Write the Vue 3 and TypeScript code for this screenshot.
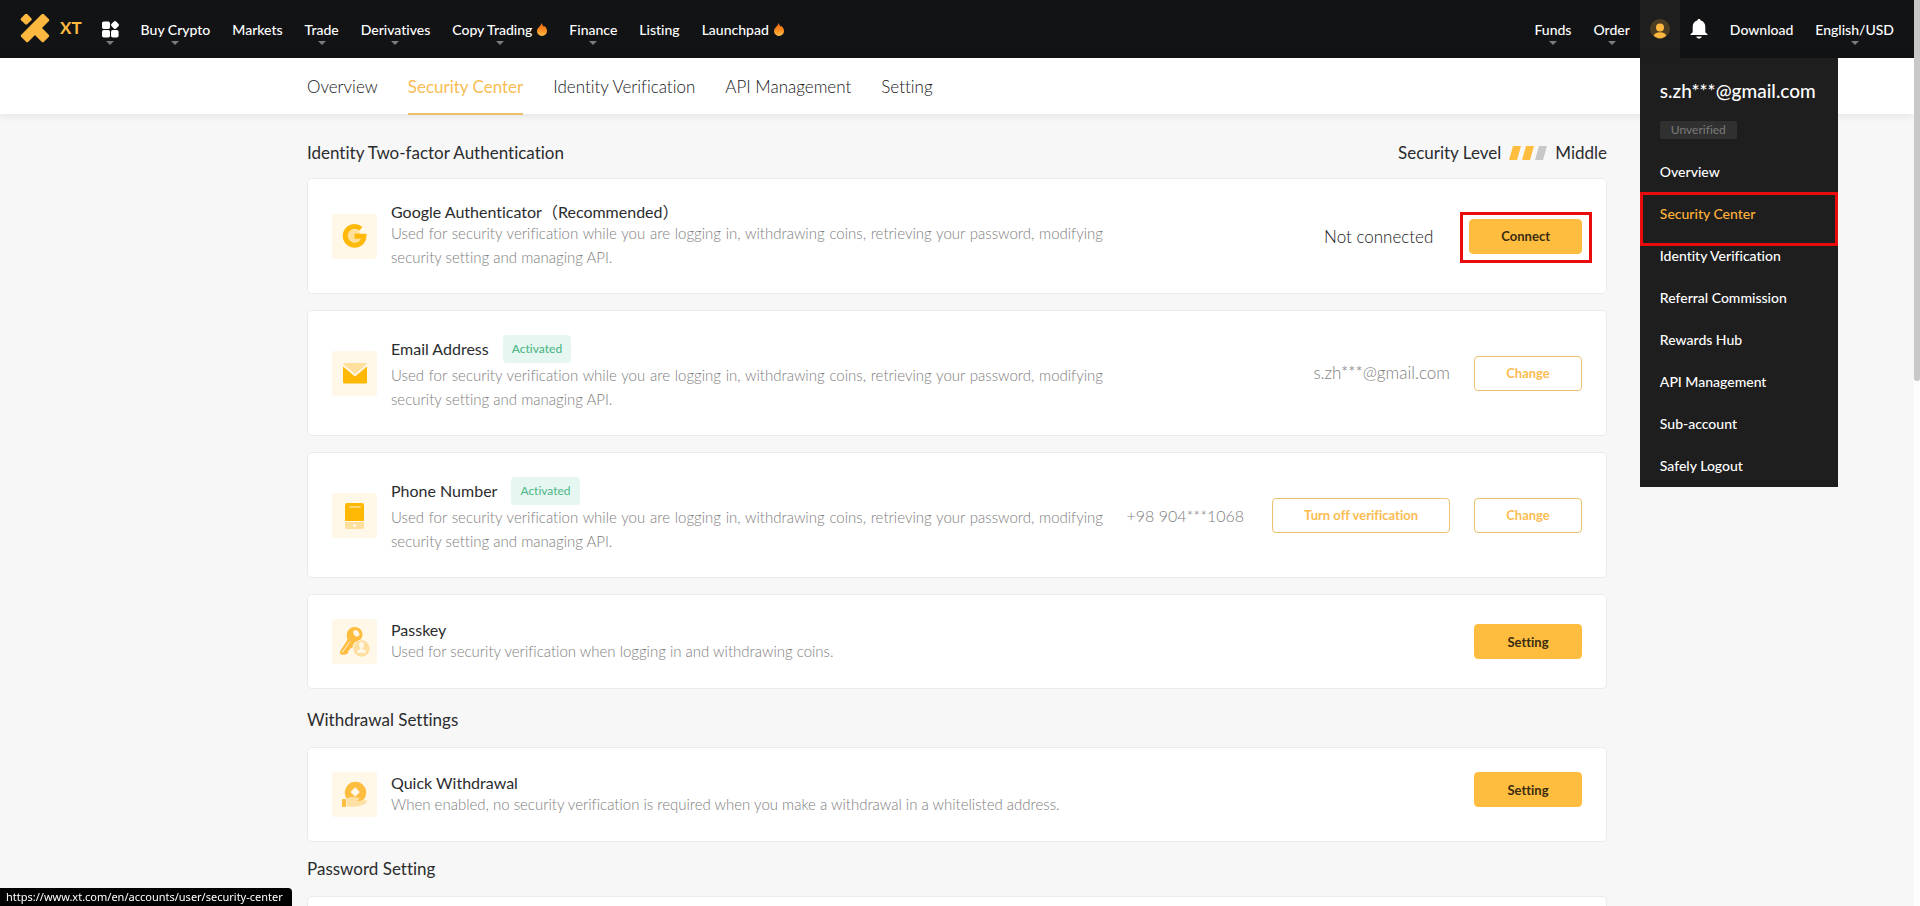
<script setup lang="ts">
interface NavItem {
  label: string
  caret?: boolean
  hot?: boolean
}

interface Action {
  label: string
  kind: 'solid' | 'outline'
  marked?: boolean
}

interface Card {
  icon: 'google' | 'mail' | 'phone' | 'key' | 'coin'
  title: string
  badge?: string
  text: string
  status?: string
  tone?: 'dark' | 'muted'
  actions: Action[]
}

interface Section {
  id: string
  title: string
  cards: Card[]
}

const leftNav: NavItem[] = [
  { label: 'Buy Crypto', caret: true },
  { label: 'Markets' },
  { label: 'Trade', caret: true },
  { label: 'Derivatives', caret: true },
  { label: 'Copy Trading', caret: true, hot: true },
  { label: 'Finance', caret: true },
  { label: 'Listing' },
  { label: 'Launchpad', hot: true },
]

const tabs: string[] = ['Overview', 'Security Center', 'Identity Verification', 'API Management', 'Setting']

const menu: string[] = [
  'Overview',
  'Security Center',
  'Identity Verification',
  'Referral Commission',
  'Rewards Hub',
  'API Management',
  'Sub-account',
  'Safely Logout',
]

const current = 'Security Center'

const usage =
  'Used for security verification while you are logging in, withdrawing coins, retrieving your password, modifying security setting and managing API.'

const sections: Section[] = [
  {
    id: 'identity',
    title: 'Identity Two-factor Authentication',
    cards: [
      {
        icon: 'google',
        title: 'Google Authenticator（Recommended）',
        text: usage,
        status: 'Not connected',
        tone: 'dark',
        actions: [{ label: 'Connect', kind: 'solid', marked: true }],
      },
      {
        icon: 'mail',
        title: 'Email Address',
        badge: 'Activated',
        text: usage,
        status: 's.zh***@gmail.com',
        tone: 'muted',
        actions: [{ label: 'Change', kind: 'outline' }],
      },
      {
        icon: 'phone',
        title: 'Phone Number',
        badge: 'Activated',
        text: usage,
        status: '+98 904***1068',
        tone: 'muted',
        actions: [
          { label: 'Turn off verification', kind: 'outline' },
          { label: 'Change', kind: 'outline' },
        ],
      },
      {
        icon: 'key',
        title: 'Passkey',
        text: 'Used for security verification when logging in and withdrawing coins.',
        actions: [{ label: 'Setting', kind: 'solid' }],
      },
    ],
  },
  {
    id: 'withdrawal',
    title: 'Withdrawal Settings',
    cards: [
      {
        icon: 'coin',
        title: 'Quick Withdrawal',
        text: 'When enabled, no security verification is required when you make a withdrawal in a whitelisted address.',
        actions: [{ label: 'Setting', kind: 'solid' }],
      },
    ],
  },
]
</script>

<template>
  <div class="page">
    <header class="topbar">
      <a class="brand" href="#" aria-label="XT">
        <svg class="brand-mark" viewBox="0 0 30 30" aria-hidden="true">
          <g fill="#fdb840">
            <rect x="-16" y="-5" width="32" height="10" rx="1.6" transform="translate(15 14) rotate(-45)" />
            <rect x="0" y="-5" width="16" height="10" rx="1.6" transform="translate(15 14) rotate(45)" />
            <rect x="-4.3" y="-4.3" width="8.6" height="8.6" rx="1.4" transform="translate(6.2 5.2) rotate(45)" />
          </g>
        </svg>
        <span class="brand-name">XT</span>
      </a>
      <nav class="nav" aria-label="Main">
        <a class="nav-link has-caret" href="#" aria-label="Products">
          <svg class="grid-icon" viewBox="0 0 17 17" aria-hidden="true">
            <g fill="#fff">
              <rect x="0" y="0.500" width="8" height="7.600" rx="1.8" />
              <rect x="0" y="9" width="8" height="7.600" rx="1.8" />
              <rect x="9" y="9" width="7.600" height="7.600" rx="1.8" />
              <rect x="-3.2" y="-3.2" width="6.4" height="6.4" rx="1.6" transform="translate(13 4) rotate(45)" />
            </g>
          </svg>
        </a>
        <a v-for="item in leftNav" :key="item.label" class="nav-link" :class="{ 'has-caret': item.caret }" href="#">
          {{ item.label }}
          <svg v-if="item.hot" class="flame" viewBox="0 0 10 13" aria-hidden="true">
            <defs>
              <linearGradient id="flame-fill" x1="0" y1="0" x2="0" y2="1">
                <stop offset="0" stop-color="#e8651a" />
                <stop offset="0.55" stop-color="#fb8c1e" />
                <stop offset="1" stop-color="#ffc04d" />
              </linearGradient>
            </defs>
            <path
              d="M4.6 0C5.4 1.8 6.1 2.8 7 3.8L7.7 3C9.2 4.7 10 6.300 10 8.100C10 11 7.800 13 5 13C2.200 13 0 11 0 8.100C0 5.600 1.700 4.900 2.700 3.300C3.500 2.200 4.300 1.400 4.600 0Z"
              fill="url(#flame-fill)"
            />
          </svg>
        </a>
      </nav>
      <nav class="nav nav-right" aria-label="Account">
        <a class="nav-link has-caret" href="#">Funds</a>
        <a class="nav-link has-caret order" href="#">Order</a>
        <div class="account">
          <button class="avatar" type="button" aria-label="Account menu" aria-expanded="true">
            <svg viewBox="0 0 20 20" aria-hidden="true">
              <circle cx="10" cy="10" r="10" fill="#4b3d22" />
              <circle cx="10" cy="8.600" r="4" fill="#fdb840" />
              <path d="M3.800 16.400C4.600 14.200 7 13.300 10 13.300C13 13.300 15.400 14.200 16.200 16.400C14.600 18.300 12.500 19.200 10 19.200C7.500 19.200 5.400 18.300 3.800 16.400Z" fill="#fdb840" />
            </svg>
          </button>
          <div class="dropdown">
            <p class="mail">s.zh***@gmail.com</p>
            <span class="unverified">Unverified</span>
            <ul class="menu">
              <li v-for="entry in menu" :key="entry" :class="{ marked: entry === current }">
                <a href="#" :class="{ active: entry === current }">{{ entry }}</a>
              </li>
            </ul>
          </div>
        </div>
        <button class="bell" type="button" aria-label="Notifications">
          <svg viewBox="0 0 18 20" aria-hidden="true">
            <path
              d="M9 0C10 0 10.600 0.600 10.700 1.500C13.600 2.200 15.300 4.500 15.300 7.600V13.200L17.500 15.200V16H0.500V15.200L2.700 13.200V7.600C2.700 4.500 4.400 2.200 7.300 1.500C7.400 0.600 8 0 9 0Z"
              fill="#fff"
            />
            <path d="M6.300 17.400H11.700C11.300 18.800 10.300 19.500 9 19.500C7.700 19.500 6.700 18.800 6.300 17.400Z" fill="#fff" />
          </svg>
        </button>
        <a class="nav-link" href="#">Download</a>
        <a class="nav-link has-caret" href="#">English/USD</a>
      </nav>
    </header>

    <nav class="tabs" aria-label="Account sections">
      <div class="tabs-inner">
        <a v-for="tab in tabs" :key="tab" class="tab" :class="{ current: tab === current }" href="#">{{ tab }}</a>
      </div>
    </nav>

    <main class="content">
      <section v-for="section in sections" :key="section.id" class="section" :class="section.id">
        <div class="section-head">
          <h2>{{ section.title }}</h2>
          <div v-if="section.id === 'identity'" class="level">
            <span>Security Level</span>
            <svg class="level-bars" viewBox="0 0 38 14" aria-hidden="true">
              <path d="M4 0H12L8 14H0Z" fill="#ffbd40" />
              <path d="M17 0H25L21 14H13Z" fill="#ffbd40" />
              <path d="M30 0H38L34 14H26Z" fill="#c8c8c8" />
            </svg>
            <span>Middle</span>
          </div>
        </div>

        <article v-for="card in section.cards" :key="card.title" class="card" :class="card.icon">
          <div class="tile">
            <svg v-if="card.icon === 'google'" viewBox="0 0 45 45" aria-hidden="true">
              <circle cx="22" cy="22.500" r="7" fill="#ffe09a" />
              <path d="M28.800 14.800A9.400 9.400 0 1 0 32 22.200H22.500" fill="none" stroke="#ffb90a" stroke-width="5" />
            </svg>
            <svg v-else-if="card.icon === 'mail'" viewBox="0 0 45 45" aria-hidden="true">
              <path d="M12 12H34Q35 12 34.400 13.200L23 23.200L11.600 13.200Q11 12 12 12Z" fill="#ffdf9c" />
              <path d="M11 15.500L23 25.500L35 15.500V31Q35 32.500 33.500 32.500H12.500Q11 32.500 11 31Z" fill="#ffb905" />
            </svg>
            <svg v-else-if="card.icon === 'phone'" viewBox="0 0 45 45" aria-hidden="true">
              <path d="M13 28V12Q13 10 15 10H30Q32 10 32 12V28Z" fill="#ffb905" />
              <rect x="17" y="13" width="12" height="2" rx="1" fill="#ffd56b" />
              <path d="M13 29H32V34Q32 36 30 36H15Q13 36 13 34Z" fill="#ffdf9c" />
              <circle cx="22.500" cy="32.500" r="1.600" fill="#fff8e9" />
            </svg>
            <svg v-else-if="card.icon === 'key'" viewBox="0 0 45 45" aria-hidden="true">
              <path
                d="M22.500 8C27 8 30.500 11 30.500 15.500C30.500 19.500 27.500 22.800 23.500 23L20.500 26.500L21.500 28L18.800 29.300L16 32.500V34.500L12.500 35.800H8.500L8 32.500L15.600 20.500C14.600 18.500 14.500 16.200 15 14C16 10.400 19 8 22.500 8Z"
                fill="#ffbd40"
              />
              <ellipse cx="24.300" cy="14.300" rx="2.700" ry="3.500" transform="rotate(-38 24.300 14.300)" fill="#fff8e9" />
              <path d="M10.200 33.500L18 22.500" stroke="#fff3d8" stroke-width="1" />
              <circle cx="29.500" cy="29.500" r="8.800" fill="#fff8e9" />
              <circle cx="29.500" cy="29.500" r="8.200" fill="#ffdfa0" />
              <ellipse cx="29.500" cy="26" rx="2.500" ry="3" fill="#fff8e9" />
              <path d="M25 33.800C25 31.500 26.500 30.900 28.400 30.300V28H30.600V30.300C32.500 30.900 34 31.500 34 33.800Z" fill="#fff8e9" />
            </svg>
            <svg v-else viewBox="0 0 45 45" aria-hidden="true">
              <circle cx="23.500" cy="20.500" r="10.700" fill="#ffbd40" />
              <rect x="-3.400" y="-3.400" width="6.800" height="6.800" rx="0.800" transform="translate(23.200 20) rotate(45)" fill="#fff8e9" />
              <path
                d="M14.500 27C17 25 19.500 24.800 22 25.200L26.500 25.400Q28 26 27 27.600L24.500 28.800C28.500 29.200 31.500 28 35 28.300C35.600 30.500 33 32 30 33.200C25 35 20 34.800 14.500 34.600Z"
                fill="#ffe0a4"
              />
              <rect x="10" y="27" width="4" height="8" rx="0.800" fill="#ffbd40" />
            </svg>
          </div>
          <div class="info">
            <div class="title-row">
              <h3>{{ card.title }}</h3>
              <span v-if="card.badge" class="badge">{{ card.badge }}</span>
            </div>
            <p>{{ card.text }}</p>
          </div>
          <div class="side">
            <span v-if="card.status" class="status" :class="card.tone">{{ card.status }}</span>
            <div v-for="action in card.actions" :key="action.label" class="action" :class="{ marked: action.marked }">
              <button type="button" class="btn" :class="action.kind">{{ action.label }}</button>
            </div>
          </div>
        </article>
      </section>

      <section class="section password">
        <div class="section-head">
          <h2>Password Setting</h2>
        </div>
        <article class="card blank"></article>
      </section>
    </main>

    <div class="scrollbar" aria-hidden="true"><div class="thumb"></div></div>
    <div class="link-hint">https://www.xt.com/en/accounts/user/security-center</div>
  </div>
</template>

<style>
html,
body {
  margin: 0;
  background: #f7f7f7;
}
</style>

<style scoped>
.page {
  box-sizing: border-box;
  height: 100vh;
  overflow: hidden;
  padding-right: 6px;
  background: #f7f7f7;
  color: #2b2c2e;
  font-family: Lato, 'Noto Sans CJK SC', sans-serif;
  font-size: 14px;
  font-variant-ligatures: none;
}

.page *,
.page *::before,
.page *::after {
  box-sizing: border-box;
}

a {
  color: inherit;
  text-decoration: none;
}

button {
  font-family: inherit;
  font-variant-ligatures: none;
  cursor: pointer;
}

h2,
h3,
p,
ul {
  margin: 0;
  padding: 0;
  font-weight: 400;
}

svg {
  display: block;
}

.topbar {
  display: flex;
  align-items: center;
  height: 58px;
  padding: 0 20px;
  background: #121315;
  color: #fff;
}

.brand {
  display: flex;
  align-items: center;
  gap: 10px;
  margin-right: 20px;
}

.brand-mark {
  width: 30px;
  height: 30px;
}

.brand-name {
  padding-bottom: 2px;
  color: #fdb840;
  font-size: 17px;
  font-weight: 700;
  line-height: 26px;
}

.nav {
  display: flex;
  align-items: center;
  gap: 22px;
  height: 100%;
}

.nav-right {
  margin-left: auto;
}

.nav-link {
  position: relative;
  display: flex;
  align-items: center;
  gap: 5px;
  height: 100%;
  font-size: 14px;
  font-weight: 500;
  white-space: nowrap;
}

.has-caret::after {
  content: '';
  position: absolute;
  bottom: 13px;
  left: 50%;
  margin-left: -4px;
  border: 4px solid transparent;
  border-top-color: #7c7d7e;
  border-bottom: 0;
}

.grid-icon {
  width: 17px;
  height: 17px;
}

.flame {
  width: 10px;
  height: 13px;
}

.order {
  margin-right: -12px;
}

.account {
  position: relative;
  height: 100%;
}

.avatar {
  display: block;
  width: 40px;
  height: 100%;
  padding: 0 10px;
  border: 0;
  background: #1e1e1e;
}

.bell {
  width: 18px;
  margin-left: -12px;
  padding: 0;
  border: 0;
  background: none;
}

.dropdown {
  position: absolute;
  z-index: 5;
  top: 100%;
  left: 0;
  width: 198px;
  padding: 20px 0 0;
  background: #1e1e1e;
}

.mail {
  padding-left: 20px;
  font-size: 19px;
  font-weight: 500;
  line-height: 26px;
}

.unverified {
  display: block;
  width: 77px;
  margin: 17px 0 12px 20px;
  border-radius: 2px;
  background: #303030;
  color: #7b7b7b;
  font-size: 12px;
  line-height: 18px;
  text-align: center;
}

.menu {
  list-style: none;
}

.menu li {
  position: relative;
}

.menu a {
  display: block;
  padding-left: 20px;
  font-size: 14px;
  font-weight: 500;
  line-height: 42px;
}

.menu .active {
  color: #ffb13b;
}

.menu .marked::after {
  content: '';
  position: absolute;
  z-index: 1;
  inset: -1px 0 -11px;
  border: 3px solid #e80c0c;
  pointer-events: none;
}

.tabs {
  position: relative;
  background: #fff;
  box-shadow: 0 2px 8px rgba(0, 0, 0, 0.08);
}

.tabs-inner {
  display: flex;
  gap: 30px;
  max-width: 1300px;
  height: 56px;
  margin: 0 auto;
}

.tab {
  position: relative;
  color: #16171a;
  font-size: 17px;
  font-weight: 300;
  line-height: 58px;
}

.tab.current {
  color: #f9bd55;
  font-weight: 400;
}

.tab.current::after {
  content: '';
  position: absolute;
  right: 0;
  bottom: -1px;
  left: 0;
  height: 2px;
  background: #ecc066;
}

.content {
  max-width: 1300px;
  margin: 0 auto;
}

.section-head {
  display: flex;
  align-items: center;
  justify-content: space-between;
  padding: 16px 0;
  line-height: 22px;
}

.identity .section-head {
  padding-top: 28px;
  padding-bottom: 14px;
}

.withdrawal .section-head {
  padding-top: 20px;
}

h2,
.level {
  font-size: 17px;
}

.level {
  display: flex;
  align-items: center;
  gap: 8px;
}

.level-bars {
  width: 38px;
  height: 14px;
}

.card {
  display: flex;
  align-items: center;
  padding: 24px;
  border: 1px solid #ebebeb;
  border-radius: 5px;
  background: #fff;
}

.card + .card {
  margin-top: 16px;
}

.blank {
  min-height: 96px;
}

.tile {
  flex: none;
  width: 45px;
  height: 45px;
  margin-right: 14px;
  border-radius: 2px;
  background: #fff8e9;
}

.info {
  flex: 0 1 712px;
}

.title-row {
  display: flex;
  align-items: center;
  gap: 14px;
}

h3 {
  font-size: 16px;
  line-height: 18px;
}

.badge {
  padding: 0 9px;
  border-radius: 4px;
  background: #e6f7f2;
  color: #4db685;
  font-size: 12px;
  line-height: 28px;
}

.info p {
  color: #7e7e7e;
  font-size: 15px;
  font-weight: 300;
  line-height: 24px;
  text-align: justify;
}

.side {
  display: flex;
  align-items: center;
  gap: 24px;
  margin-left: auto;
  white-space: nowrap;
}

.coin .side {
  align-self: flex-start;
}

.google .side {
  gap: 36px;
}

.status {
  color: #16171a;
  font-size: 17px;
  font-weight: 300;
}

.status.muted {
  color: #7e7e7e;
}

.phone .status {
  margin-right: 4px;
  font-size: 16px;
}

.action {
  position: relative;
}

.action.marked::after {
  content: '';
  position: absolute;
  inset: -7px -10px -9px -9px;
  border: 3px solid #e80c0c;
  pointer-events: none;
}

.btn {
  display: block;
  min-width: 108px;
  height: 35px;
  padding: 0 31px;
  border: 1px solid #ffbd40;
  border-radius: 4px;
  font-size: 13px;
  font-weight: 700;
}

.btn.solid {
  background: #ffbd40;
  color: #3a2c10;
}

.btn.outline {
  border-color: #edc26c;
  background: #fff;
  color: #fbbc52;
}

.scrollbar {
  position: fixed;
  z-index: 9;
  top: 0;
  right: 0;
  bottom: 0;
  width: 6px;
  background: #fdfdfd;
}

.thumb {
  height: 42%;
  border-radius: 0 0 3px 3px;
  background: #c8c8c8;
}

.link-hint {
  position: fixed;
  bottom: 0;
  left: 0;
  padding: 0 9px 0 6px;
  border-radius: 0 4px 0 0;
  background: #000;
  color: #fff;
  font-family: 'Noto Sans', sans-serif;
  font-size: 11px;
  line-height: 18px;
}
</style>
